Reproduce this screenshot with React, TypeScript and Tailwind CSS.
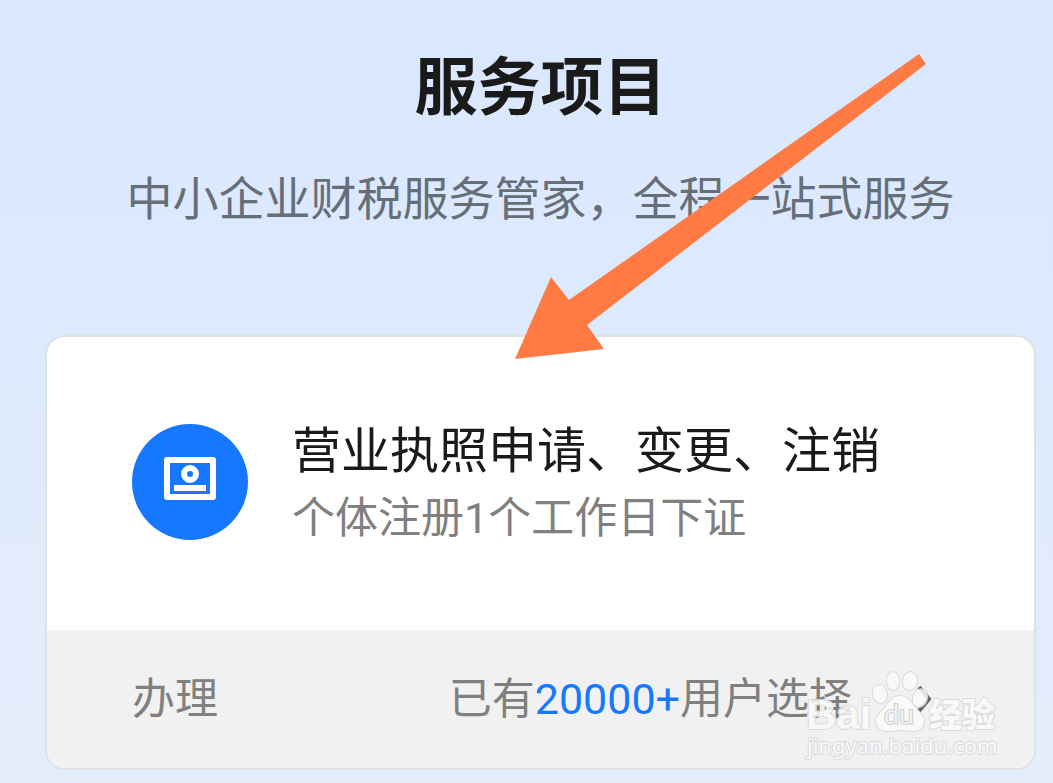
import React from 'react';

interface ServiceCardProps {
    title: string;
    desc: string;
    action: string;
    count: string;
}

function LicenseIcon() {
    return (
        <span className="flex size-[116px] shrink-0 items-center justify-center rounded-full bg-[#1677ff] pb-1.5">
            <svg viewBox="0 0 52 43" className="h-[43px] w-[52px]" fill="none" aria-hidden="true">
                <rect x="3" y="3" width="46" height="37" stroke="#fff" strokeWidth="6" strokeLinejoin="round" />
                <circle cx="26" cy="17" r="6" stroke="#fff" strokeWidth="6" />
                <rect x="10" y="28" width="32" height="6" fill="#fff" />
            </svg>
        </span>
    );
}

function Watermark() {
    return (
        <svg
            viewBox="0 0 194 100"
            className="pointer-events-none absolute right-9 bottom-1 h-[100px] w-[194px] overflow-visible"
            fill="#fbfbfb"
            stroke="#d6d6d6"
            strokeWidth="2"
            strokeLinejoin="round"
            paintOrder="stroke"
            opacity="0.85"
            aria-hidden="true"
        >
            <text x="2" y="65" fontSize="42" fontWeight="700" fontFamily="Liberation Sans, sans-serif">Bai</text>
            <ellipse cx="76" cy="30" rx="7" ry="9" transform="rotate(-12 76 30)" />
            <ellipse cx="89" cy="17" rx="6" ry="9" />
            <ellipse cx="106" cy="17" rx="7" ry="9" transform="rotate(12 106 17)" />
            <ellipse cx="116" cy="34" rx="7" ry="9" transform="rotate(20 116 34)" />
            <path d="M96 32c-7 0-11 5-14 10-4 6-10 8-10 15 0 6 5 10 11 10 5 0 8-1 13-1s9 1 13 1c7 0 11-4 11-10 0-7-6-9-10-15-3-5-7-10-14-10z" />
            <text x="80" y="60" fontSize="27" fontWeight="400" fontFamily="Lato, sans-serif" fill="#f1f1f1" stroke="#c8c8c8">du</text>
            <text x="125" y="63" fontSize="33" fontWeight="900" fontFamily="Noto Sans CJK SC, sans-serif">经验</text>
            <text x="3" y="90" fontSize="22" fontFamily="Noto Sans, sans-serif">jingyan.baidu.com</text>
        </svg>
    );
}

function ServiceCard({ title, desc, action, count }: ServiceCardProps) {
    return (
        <section className="relative overflow-hidden rounded-[20px] border-2 border-[#dfe1e5] bg-white">
            <div className="flex h-[293px] items-center gap-11 px-[85px] pb-1">
                <LicenseIcon />
                <div className="pt-1.5 whitespace-nowrap">
                    <h2 className="text-[49px] leading-[66px] text-[#1a1a1a]">{title}</h2>
                    <p className="text-[43px] leading-[66px] text-[#808080]">{desc}</p>
                </div>
            </div>
            <div className="flex h-[138px] items-center justify-between whitespace-nowrap bg-[#f1f1f1] pr-[102px] pl-[85px] text-[43px] text-[#808080]">
                <button type="button">{action}</button>
                <p className="flex items-center gap-16">
                    <span>
                        已有<span className="text-[#1677ff]">{count}</span>用户选择
                    </span>
                    <svg viewBox="0 0 16 28" className="h-7 w-4" fill="none" stroke="#666" strokeWidth="4" aria-hidden="true">
                        <path d="M3 2l10 12L3 26" />
                    </svg>
                </p>
            </div>
            <Watermark />
        </section>
    );
}

export default function App() {
    return (
        <main className="relative min-h-screen overflow-hidden bg-linear-to-b from-[#d9e7ff] to-[#e4edfb] pt-12 pr-[17px] pb-3 pl-[45px] font-[Roboto,'Noto_Sans_CJK_SC',sans-serif]">
            <header className="mb-[97px] text-center whitespace-nowrap">
                <h1 className="mb-8 text-[63px] leading-[80px] font-bold text-[#1a1a1a]">服务项目</h1>
                <p className="text-[46px] leading-[78px] text-[#666e78]">中小企业财税服务管家，全程一站式服务</p>
            </header>

            <ServiceCard
                title="营业执照申请、变更、注销"
                desc="个体注册1个工作日下证"
                action="办理"
                count="20000+"
            />

            {/* Arrow pointing at the card */}
            <svg
                viewBox="0 0 412 306"
                className="pointer-events-none absolute top-[54px] left-[515px] h-[306px] w-[412px]"
                fill="#ff7b43"
                aria-hidden="true"
            >
                <path d="M404 0L411 10L72 271L89 295L0 305L36 223L54 246Z" />
            </svg>
        </main>
    );
}
